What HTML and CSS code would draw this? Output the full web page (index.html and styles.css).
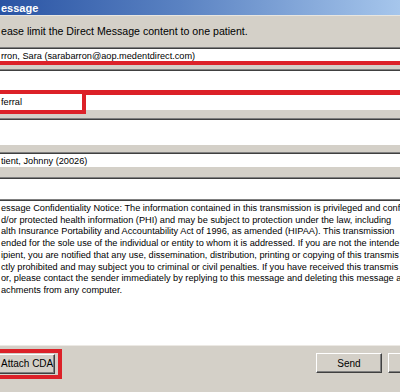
FILE: index.html
```html
<!DOCTYPE html>
<html lang="en">

<head>
    <meta charset="UTF-8">
    <title>Direct Message</title>
    <link rel="stylesheet" href="styles.css">
</head>

<body>
    <div class="window">
        <div class="titlebar">essage</div>

        <div class="hint">ease limit the Direct Message content to one patient.</div>

        <div class="box box-to">rron, Sara (sarabarron@aop.medentdirect.com)</div>
        <div class="gap gap-small"></div>
        <div class="box box-cc"></div>

        <div class="subject-row">
            <div class="subject-mark">ferral</div>
            <div class="subject-rest"></div>
        </div>
        <div class="gap gap-small"></div>

        <div class="box box-tall"></div>
        <div class="gap gap-mid"></div>
        <div class="box box-patient">tient, Johnny (20026)</div>
        <div class="gap gap-wide"></div>
        <div class="box box-empty"></div>

        <div class="message">
            <div class="line">essage Confidentiality Notice: The information contained in this transmission is privileged and conf</div>
            <div class="line">d/or protected health information (PHI) and may be subject to protection under the law, including</div>
            <div class="line">alth Insurance Portability and Accountability Act of 1996, as amended (HIPAA). This transmission</div>
            <div class="line">ended for the sole use of the individual or entity to whom it is addressed. If you are not the intende</div>
            <div class="line">ipient, you are notified that any use, dissemination, distribution, printing or copying of this transmis</div>
            <div class="line">ctly prohibited and may subject you to criminal or civil penalties. If you have received this transmis</div>
            <div class="line">or, please contact the sender immediately by replying to this message and deleting this message a</div>
            <div class="line">achments from any computer.</div>
        </div>

        <div class="footer">
            <div class="attach-mark">
                <button class="btn btn-attach">Attach CDA</button>
            </div>
            <div class="spacer"></div>
            <button class="btn btn-send">Send</button>
            <button class="btn btn-cancel"></button>
        </div>
    </div>
</body>

</html>
```

FILE: styles.css
```css
body {
    margin: 0;
    padding: 0;
    width: 400px;
    height: 392px;
    overflow: hidden;
    background: #d4d0c8;
    font-family: 'Liberation Sans', Arial, sans-serif;
    color: #000;
}

.window {
    display: flex;
    flex-direction: column;
    height: 392px;
}

.titlebar {
    height: 16px;
    line-height: 16px;
    padding-left: 1px;
    color: #fff;
    font-weight: bold;
    font-size: 11px;
    background: linear-gradient(to right, #2a54a4, #5a82c2 45%, #a6c6ec);
    border-bottom: 1px solid #e8e6e0;
    box-sizing: border-box;
}

.hint {
    height: 31px;
    line-height: 31px;
    font-size: 10.6px;
    padding-left: 1px;
}

.box {
    background: #fff;
    border-top: 1px solid #808080;
    box-shadow: inset 0 1px 0 #404040;
    font-size: 9.2px;
    padding-left: 1px;
    white-space: nowrap;
}

.box-to {
    height: 13px;
    line-height: 16px;
    border-bottom: 4px solid #dc2128;
}

.box-cc {
    height: 20px;
}

.gap {
    background: #d4d0c8;
}

.gap-small {
    height: 4px;
}

.gap-mid {
    height: 7px;
}

.gap-wide {
    height: 10px;
}

.subject-row {
    display: flex;
    height: 24px;
}

.subject-mark {
    width: 81px;
    height: 16px;
    border: 4px solid #dc2128;
    border-left: none;
    background: #fff;
    font-size: 9.2px;
    line-height: 17px;
    padding-left: 1px;
}

.subject-rest {
    flex: 1;
    border-top: 5px solid #dc2128;
    border-bottom: 4px solid #d4d0c8;
    background: #fff;
}

.box-tall {
    height: 26px;
}

.box-patient {
    height: 14px;
    line-height: 16px;
}

.box-empty {
    height: 21px;
}

.message {
    height: 146px;
    background: #fff;
    border-top: 1px solid #808080;
    box-shadow: inset 0 1px 0 #404040;
    padding: 3px 0 0 1px;
    box-sizing: border-box;
    font-size: 9.2px;
    line-height: 11.7px;
    overflow: hidden;
}

.line {
    white-space: nowrap;
}

.footer {
    flex: 1;
    display: flex;
    align-items: flex-start;
    border-top: 1px solid #ece9e4;
}

.attach-mark {
    margin-top: 3px;
    border: 4px solid #dc2128;
    border-left: none;
    padding: 0 3px 1px 0;
}

.spacer {
    flex: 1;
}

.btn {
    height: 20px;
    padding: 0;
    font-family: 'Liberation Sans', Arial, sans-serif;
    font-size: 10px;
    color: #000;
    background: #d4d0c8;
    border: 1px solid;
    border-color: #fff #404040 #404040 #fff;
    box-shadow: inset -1px -1px 0 #808080;
}

.btn-attach {
    width: 55px;
    border-left: none;
    text-align: left;
    padding-left: 1px;
}

.btn-send {
    width: 66px;
    margin-top: 7px;
}

.btn-cancel {
    width: 66px;
    margin: 7px -54px 0 6px;
}
```
